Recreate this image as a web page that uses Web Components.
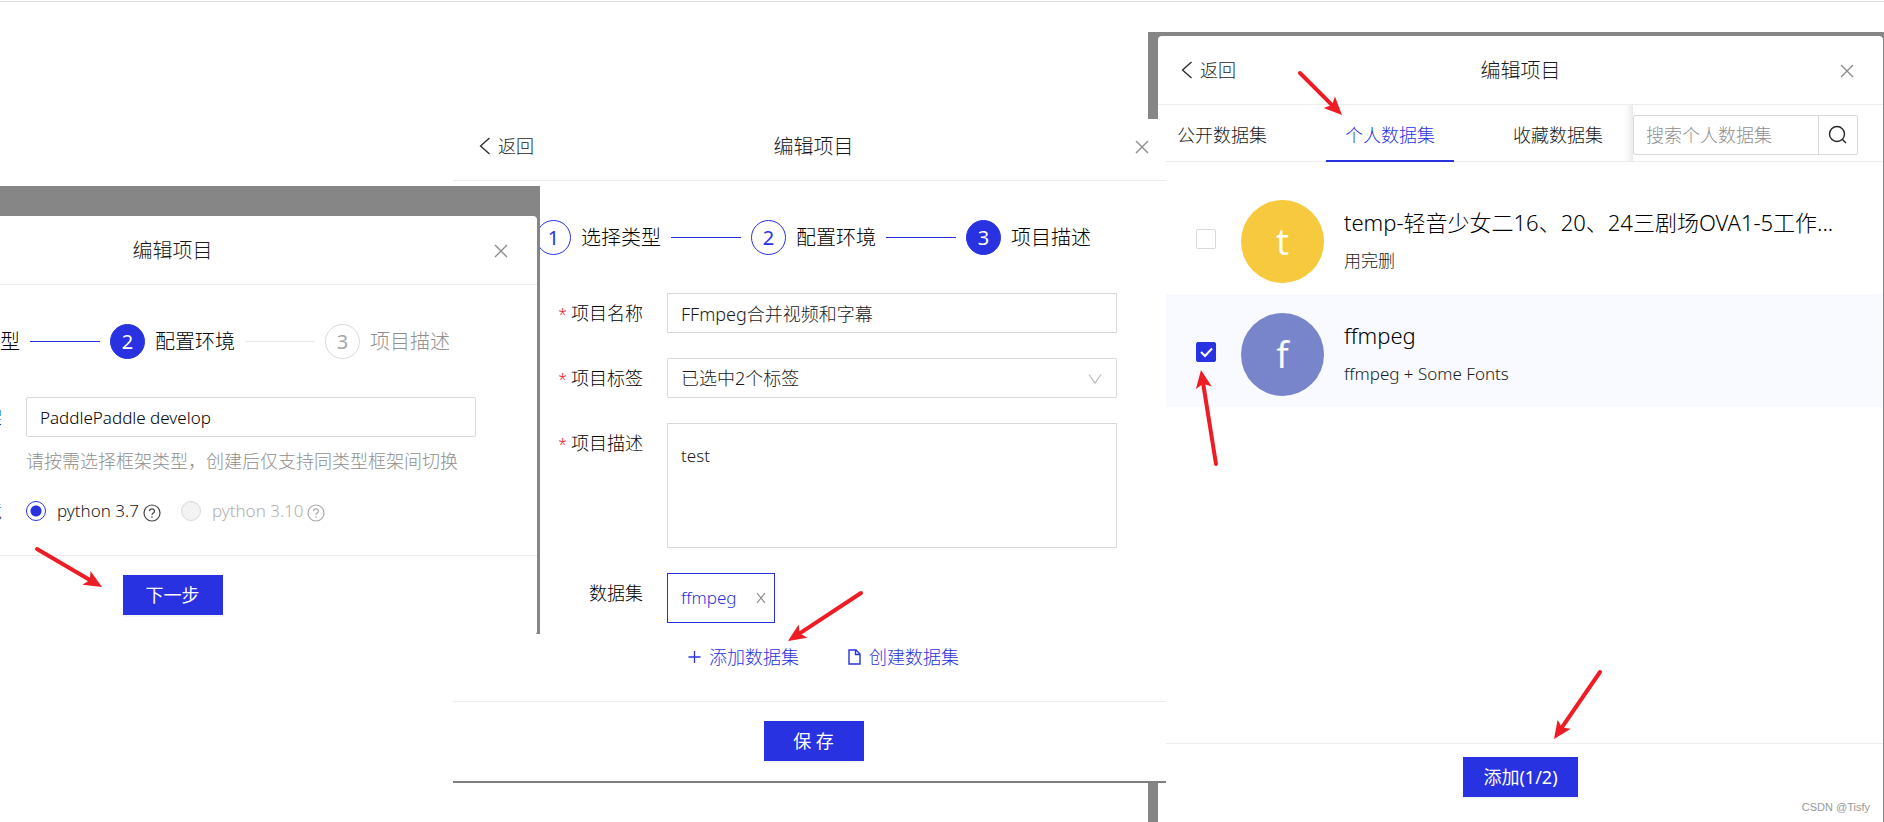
<!DOCTYPE html>
<html lang="zh-CN">
<head>
<meta charset="utf-8">
<title>编辑项目</title>
<style>
  :root {
    --blue: #2932e1;
    --line: #ececec;
    --edge: #d9d9d9;
    --muted: #8f8f8f;
  }
  body {
    margin: 0;
    background: #fff;
    color: #000;
    font-family: "Noto Sans", "Noto Sans CJK SC", sans-serif;
    font-size: 18px;
    font-weight: 300;
    line-height: 24px;
  }
</style>
</head>
<body>
<project-guide></project-guide>

<script>
const define = (name, html, setup) => {
  const template = document.createElement('template');
  template.innerHTML = html;
  customElements.define(name, class extends HTMLElement {
    constructor() {
      super();
      this.attachShadow({ mode: 'open' }).append(template.content.cloneNode(true));
    }
    connectedCallback() {
      if (setup) setup(this, this.shadowRoot);
    }
  });
};

/* Red pointer drawn from its own corner to a tip dx, dy away */
define('mark-arrow', `
  <style>
    :host { position: absolute; z-index: 3; pointer-events: none; }
    svg { display: block; overflow: visible; }
  </style>
  <svg width="1" height="1" aria-hidden="true">
    <line stroke="#ee1c25" stroke-width="4" stroke-linecap="round"></line>
    <path d="M0 0L-18 8L-14 0L-18 -8Z" fill="#ee1c25"></path>
  </svg>
`, (host, root) => {
  const dx = +host.getAttribute('dx'), dy = +host.getAttribute('dy');
  const len = Math.hypot(dx, dy), line = root.querySelector('line');
  line.setAttribute('x2', dx * (len - 14) / len);
  line.setAttribute('y2', dy * (len - 14) / len);
  root.querySelector('path').setAttribute('transform',
    `translate(${dx} ${dy}) rotate(${Math.atan2(dy, dx) * 180 / Math.PI})`);
});

define('main-button', `
  <style>
    :host { display: inline-block; }
    button {
      height: 40px; min-width: 100px; padding: 0 20px; border: 0;
      background: var(--blue); color: #fff; font: inherit; font-weight: 400;
      box-shadow: 0 2px 0 rgba(0, 0, 0, .04);
    }
  </style>
  <button type="button"><slot></slot></button>
`);

define('dialog-shell', `
  <style>
    :host { display: flex; flex-direction: column; background: #fff; border-radius: 4px; }
    header {
      display: grid; grid-template-columns: 1fr auto 1fr; align-items: center;
      height: 66px; border-bottom: 1px solid var(--line); padding: 2px 28px 0;
    }
    h1 { margin: 0; font-size: 20px; line-height: 28px; font-weight: inherit; color: #1a1a1a; }
    .close { justify-self: end; border: 0; background: none; padding: 0; height: 16px; }
    svg { display: block; }
    main { flex: 1; }
    footer {
      border-top: 1px solid var(--line); text-align: center;
      padding: var(--foot-top, 19px) 0 var(--foot-bottom, 20px);
      display: flex; justify-content: center;
    }
  </style>
  <header>
    <div><slot name="back"></slot></div>
    <h1>编辑项目</h1>
    <button class="close" type="button" aria-label="关闭">
      <svg width="16" height="16" viewBox="0 0 16 16" fill="none" stroke="#8c8c8c" stroke-width="1.4"><path d="M2 2L14 14M14 2L2 14"/></svg>
    </button>
  </header>
  <main><slot></slot></main>
  <footer><slot name="footer"></slot></footer>
`);

define('back-link', `
  <style>
    :host { display: block; }
    a { display: inline-flex; align-items: center; gap: 7px; color: #1a1a1a; text-decoration: none; }
  </style>
  <a href="#back">
    <svg width="12" height="18" viewBox="0 0 12 18" fill="none" stroke="#262626" stroke-width="1.3"><path d="M10.500 1L1.500 9L10.500 17"/></svg>
    <slot></slot>
  </a>
`);

define('step-item', `
  <style>
    :host { display: flex; align-items: center; gap: 10px; font-size: 20px; white-space: nowrap; }
    b {
      box-sizing: border-box; width: 35px; height: 35px; border: 1px solid var(--blue);
      border-radius: 50%; color: var(--blue); font-weight: 400; line-height: 33px; text-align: center;
    }
    i { width: 70px; height: 1px; background: var(--blue); }
    :host([state=active]) b { background: var(--blue); color: #fff; }
    :host([state=wait]) { color: var(--muted); }
    :host([state=wait]) b { border-color: var(--edge); color: #a6a6a6; }
    :host([next=wait]) i { background: #e8e8e8; }
    :host([next=none]) i { display: none; }
  </style>
  <b></b><slot></slot><i></i>
`, (host, root) => { root.querySelector('b').textContent = host.getAttribute('n'); });

define('step-bar', `
  <style>:host { display: flex; justify-content: center; gap: 10px; padding: 39px 0 38px; }</style>
  <slot></slot>
`);

const formStyles = `
  :host { display: block; }
  .row { display: grid; grid-template-columns: 194px minmax(0, 1fr); column-gap: 24px; padding-right: 62px; }
  .row + .row { margin-top: 25px; }
  .name { text-align: right; line-height: 40px; height: 40px; white-space: nowrap; }
  .req::before { content: "*"; color: #f5222d; font-size: 16px; line-height: 20px; margin-right: 4px; }
  input.box, select, textarea {
    box-sizing: border-box; width: 100%; height: 40px; margin: 0; padding: 0 13px;
    border: 1px solid var(--edge); background: #fff; color: #1a1a1a; font: inherit; display: block;
  }
  .round { border-radius: 2px; }
`;

/* Step 2: framework and environment */
define('config-dialog', `
  <style>
    ${formStyles}
    :host { overflow: hidden; background: #868686; }
    dialog-shell { margin: 30px 3px 0 -192px; }
    .row { padding-right: 61px; }
    input.box { color: #000; font-size: 17px; }
    .hint { margin: 11px 0 0; line-height: 26px; color: var(--muted); font-size: 18px; white-space: nowrap; }
    .radios { display: flex; align-items: center; padding-bottom: 32px; height: 24px; font-size: 17px; }
    .radios label { display: flex; align-items: center; color: #1a1a1a; white-space: nowrap; }
    .radios label + label { margin-left: 20px; color: #b0b0b0; }
    .radios input {
      appearance: none; box-sizing: border-box; width: 20px; height: 20px; margin: 0 11px 0 0;
      border: 1px solid var(--blue); border-radius: 50%; background: #fff;
    }
    .radios input:checked { background: radial-gradient(circle, var(--blue) 5px, #fff 6px); }
    .radios input:disabled { border-color: var(--edge); background: #f3f3f3; }
    .radios svg { margin: 4px 0 0 4px; }
    .name.mid { line-height: 24px; height: 24px; }
  </style>
  <dialog-shell>
    <step-bar>
      <step-item n="1">选择类型</step-item>
      <step-item n="2" state="active" next="wait">配置环境</step-item>
      <step-item n="3" state="wait" next="none">项目描述</step-item>
    </step-bar>
    <div class="row">
      <label class="name" for="framework">项目框架</label>
      <div>
        <input class="box round" id="framework" value="PaddlePaddle develop">
        <p class="hint">请按需选择框架类型，创建后仅支持同类型框架间切换</p>
      </div>
    </div>
    <div class="row">
      <span class="name mid">项目环境</span>
      <div class="radios">
        <label><input type="radio" name="env" checked>python 3.7
          <svg width="18" height="18" viewBox="0 0 18 18" fill="none" stroke="#444" stroke-width="1.200"><circle cx="9" cy="9" r="8"/><path d="M6.500 7.300C6.500 4.200 11.500 4.200 11.500 7.200C11.500 9 9 9 9 11"/><path d="M9 12.200V13.700"/></svg>
        </label>
        <label><input type="radio" name="env" disabled>python 3.10
          <svg width="18" height="18" viewBox="0 0 18 18" fill="none" stroke="#aaa" stroke-width="1.200"><circle cx="9" cy="9" r="8"/><path d="M6.500 7.300C6.500 4.200 11.500 4.200 11.500 7.200C11.500 9 9 9 9 11"/><path d="M9 12.200V13.700"/></svg>
        </label>
      </div>
    </div>
    <main-button slot="footer">下一步</main-button>
  </dialog-shell>
`);

/* Step 3: name, tags, description and datasets */
define('describe-dialog', `
  <style>
    ${formStyles}
    :host { overflow: hidden; background: #7f7f7f; }
    dialog-shell { margin: -7px -12px 2px -4px; }
    .row { padding-right: 61px; }
    back-link { margin-left: 2px; }
    .pick { position: relative; }
    select { appearance: none; }
    .pick svg { position: absolute; right: 15px; top: 15px; pointer-events: none; }
    textarea { height: 125px; padding: 20px 13px; resize: none; font-size: 17px; }
    .tag {
      display: flex; width: fit-content; align-items: center; gap: 20px; box-sizing: border-box;
      height: 50px; padding: 0 8px 0 13px; border: 1px solid var(--blue); color: var(--blue); font-size: 17px;
    }
    .tag button { border: 0; background: none; padding: 0; font: inherit; color: #999; }
    .tag svg { display: block; }
    .links { display: flex; gap: 49px; margin: 22px 0 32px; padding-left: 21px; }
    .links a { display: inline-flex; align-items: center; gap: 8px; color: var(--blue); text-decoration: none; white-space: nowrap; }
  </style>
  <dialog-shell>
    <back-link slot="back">返回</back-link>
    <step-bar>
      <step-item n="1">选择类型</step-item>
      <step-item n="2">配置环境</step-item>
      <step-item n="3" state="active" next="none">项目描述</step-item>
    </step-bar>
    <div class="row">
      <label class="name req" for="name">项目名称</label>
      <input class="box" id="name" value="FFmpeg合并视频和字幕">
    </div>
    <div class="row">
      <label class="name req" for="tags">项目标签</label>
      <div class="pick">
        <select class="round" id="tags"><option>已选中2个标签</option></select>
        <svg width="14" height="12" viewBox="0 0 14 12" fill="none" stroke="#bfbfbf" stroke-width="1.300"><path d="M1 1.500L7 10L13 1.500"/></svg>
      </div>
    </div>
    <div class="row">
      <label class="name req" for="about">项目描述</label>
      <textarea id="about">test</textarea>
    </div>
    <div class="row">
      <span class="name">数据集</span>
      <div>
        <span class="tag">ffmpeg
          <button type="button" aria-label="移除"><svg width="10" height="12" viewBox="0 0 10 12" fill="none" stroke="#8c8c8c" stroke-width="1.200"><path d="M1 1L9 11M9 1L1 11"/></svg></button>
        </span>
        <div class="links">
          <a href="#add"><svg width="13" height="14" viewBox="0 0 13 14" fill="none" stroke="currentColor" stroke-width="1.300"><path d="M6.500 1V13M0.500 7H12.500"/></svg>添加数据集</a>
          <a href="#create"><svg width="13" height="16" viewBox="0 0 13 16" fill="none" stroke="currentColor" stroke-width="1.400"><path d="M1 1H8L12 5V15H1ZM7.500 1V5.500H12"/></svg>创建数据集</a>
        </div>
      </div>
    </div>
    <main-button slot="footer">保 存</main-button>
  </dialog-shell>
`);

define('dataset-row', `
  <style>
    :host { display: block; }
    label { display: flex; align-items: center; padding: 19px 38px 11px; }
    :host([checked]) label { background: #f8faff; }
    .tick { position: relative; margin: 0 25px 6px 0; height: 20px; }
    input {
      appearance: none; display: block; box-sizing: border-box; width: 20px; height: 20px;
      margin: 0; border: 1px solid var(--edge); border-radius: 2px; background: #fff;
    }
    input:checked { background: var(--blue); border-color: var(--blue); }
    svg { position: absolute; inset: 0; display: none; }
    input:checked + svg { display: block; }
    .face {
      width: 83px; height: 83px; margin-right: 20px; flex: none; border-radius: 50%;
      background: var(--face); color: #fff; font-size: 36px; line-height: 83px; text-align: center; font-weight: 400;
    }
    .text { display: grid; gap: 12px; min-width: 0; white-space: nowrap; margin-bottom: 4px; }
    .title { font-size: 22px; line-height: 30px; }
    .sub { color: #1a1a1a; font-size: 17px; }
  </style>
  <label>
    <span class="tick"><input type="checkbox"><svg width="20" height="20" viewBox="0 0 20 20" fill="none" stroke="#fff" stroke-width="2"><path d="M5 10L9 14L16 6.500"/></svg></span>
    <span class="face"><slot name="face"></slot></span>
    <span class="text"><span class="title"><slot></slot></span><span class="sub"><slot name="sub"></slot></span></span>
  </label>
`, (host, root) => { root.querySelector('input').checked = host.hasAttribute('checked'); });

/* Dataset picker */
define('dataset-dialog', `
  <style>
    :host { display: flex; box-sizing: border-box; background: #868686; padding: 4px 1px 0 10px; }
    dialog-shell { flex: 1; min-width: 0; border-radius: 4px 4px 0 0; --foot-top: 13px; --foot-bottom: 25px; }
    back-link { margin-left: -5px; }
    .bar { display: flex; height: 56px; border-bottom: 1px solid var(--line); margin-bottom: 19px; }
    nav { flex: 1; display: flex; gap: 40px; box-shadow: inset -12px 0 10px -10px rgba(0, 0, 0, .12); }
    nav a { box-sizing: border-box; height: 57px; padding: 0 19px; line-height: 60px; color: #1a1a1a; text-decoration: none; white-space: nowrap; }
    nav a.on { color: var(--blue); border-bottom: 2px solid var(--blue); }
    form { display: flex; width: 225px; margin: 10px 25px 0 0; height: 40px; box-sizing: border-box; border: 1px solid var(--edge); border-radius: 2px; }
    input { flex: 1; min-width: 0; border: 0; margin: 0; padding: 0 12px; background: none; font: inherit; color: #000; }
    input::placeholder { color: var(--muted); opacity: 1; }
    form button { width: 39px; border: 0; border-left: 1px solid var(--edge); background: none; padding: 0 0 0 9px; }
    svg { display: block; }
  </style>
  <dialog-shell>
    <back-link slot="back">返回</back-link>
    <div class="bar">
      <nav><a href="#public">公开数据集</a><a class="on" href="#mine">个人数据集</a><a href="#saved">收藏数据集</a></nav>
      <form>
        <input type="text" aria-label="搜索" placeholder="搜索个人数据集">
        <button type="button" aria-label="搜索"><svg width="20" height="20" viewBox="0 0 20 20" fill="none" stroke="#262626" stroke-width="1.400"><circle cx="9" cy="9" r="7.500"/><path d="M14.300 14.300L18 18"/></svg></button>
      </form>
    </div>
    <dataset-row style="--face: #f7c93e"><span slot="face">t</span>temp-轻音少女二16、20、24三剧场OVA1-5工作...<span slot="sub">用完删</span></dataset-row>
    <dataset-row checked style="--face: #7885cb"><span slot="face">f</span>ffmpeg<span slot="sub">ffmpeg + Some Fonts</span></dataset-row>
    <main-button slot="footer">添加(1/2)</main-button>
  </dialog-shell>
`);

define('project-guide', `
  <style>
    :host {
      display: grid; position: relative; box-sizing: border-box; min-height: 100vh; overflow: hidden;
      grid-template-columns: 453fr 87fr 608fr 18fr 718fr; align-items: start;
    }
    :host::before { content: ""; position: absolute; left: 0; right: 0; top: 1px; height: 1px; background: #ddd; }
    section { position: relative; grid-row: 1; min-width: 0; }
    .config { grid-column: 1 / 3; margin-top: 186px; z-index: 2; }
    .describe { grid-column: 2 / 5; margin-top: 119px; z-index: 1; }
    .data { grid-column: 4 / 6; margin-top: 32px; align-self: stretch; display: flex; }
    .config config-dialog { height: 448px; }
    .data dataset-dialog { flex: 1; min-width: 0; }
    small { position: absolute; right: 14px; bottom: 7px; font: 11px/16px "Liberation Sans", sans-serif; color: #999; z-index: 3; }
  </style>
  <section class="config">
    <config-dialog></config-dialog>
    <mark-arrow dx="65" dy="38" style="left: 37px; top: 363px"></mark-arrow>
  </section>
  <section class="describe">
    <describe-dialog></describe-dialog>
    <mark-arrow dx="-73" dy="48" style="left: 408px; top: 474px"></mark-arrow>
  </section>
  <section class="data">
    <dataset-dialog></dataset-dialog>
    <mark-arrow dx="42" dy="42" style="left: 152px; top: 41px"></mark-arrow>
    <mark-arrow dx="-15" dy="-94" style="left: 68px; top: 432px"></mark-arrow>
    <mark-arrow dx="-46" dy="67" style="left: 452px; top: 640px"></mark-arrow>
  </section>
  <small>CSDN @Tisfy</small>
`);
</script>
</body>
</html>
